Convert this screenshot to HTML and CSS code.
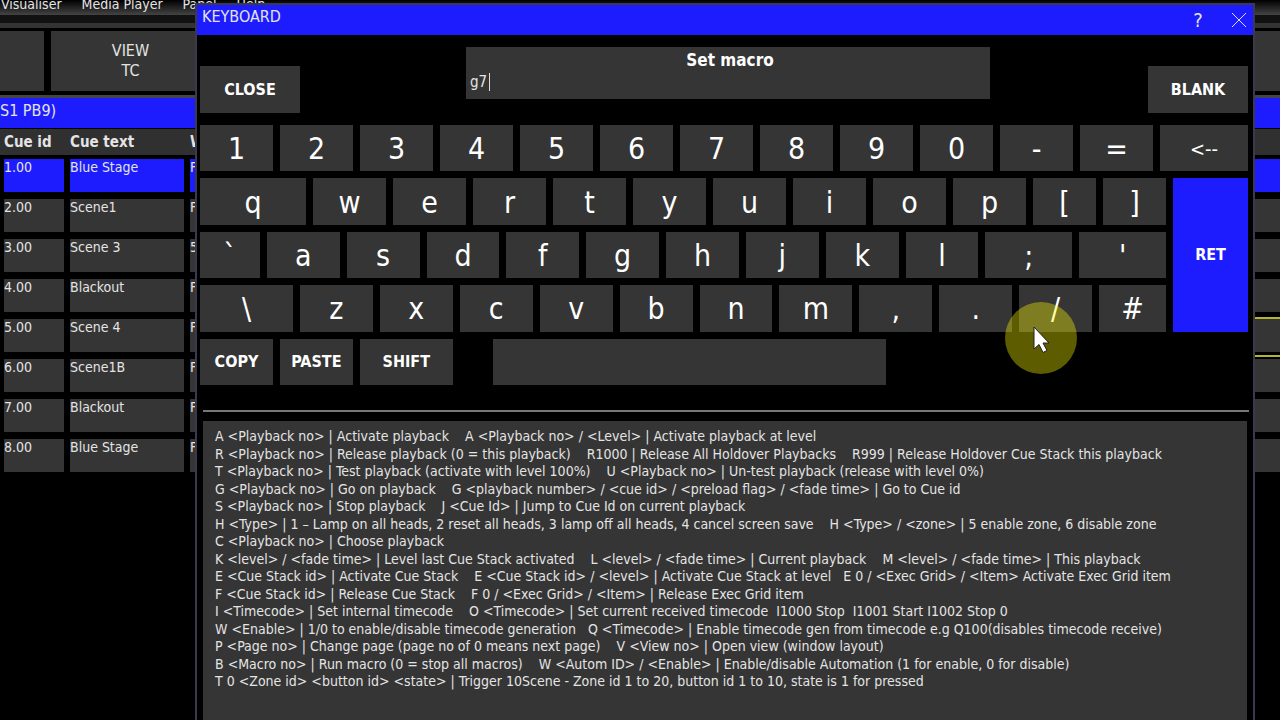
FILE: index.html
```
<!DOCTYPE html>
<html lang="en">
<head>
	<meta charset="utf-8">
	<title>Keyboard</title>
	<link rel="stylesheet" href="styles.css">
</head>
<body>
	<div class="app">
		<nav class="menu">
			<a href="#">Visualiser</a>
			<a href="#">Media Player</a>
			<a href="#">Panel</a>
			<a href="#">Help</a>
		</nav>
		<div class="toolbar"></div>
		<div class="views">
			<button class="view view-first" aria-label="View"></button>
			<button class="view">VIEW<br>TC</button>
			<button class="view view-rest" aria-label="View"></button>
		</div>
		<h2 class="stack-title">S1 PB9)</h2>
		<table class="cues">
			<thead>
				<tr><th class="col-id">Cue id</th><th class="col-text">Cue text</th><th>Wait</th><th class="col-end"></th></tr>
			</thead>
			<tbody>
				<tr class="current"><td><div>1.00</div></td><td><div>Blue Stage</div></td><td><div>F</div></td><td><div></div></td></tr>
				<tr><td><div>2.00</div></td><td><div>Scene1</div></td><td><div>F</div></td><td><div></div></td></tr>
				<tr><td><div>3.00</div></td><td><div>Scene 3</div></td><td><div>5</div></td><td><div></div></td></tr>
				<tr><td><div>4.00</div></td><td><div>Blackout</div></td><td><div>F</div></td><td><div></div></td></tr>
				<tr><td><div>5.00</div></td><td><div>Scene 4</div></td><td><div>F</div></td><td><div class="marked"></div></td></tr>
				<tr><td><div>6.00</div></td><td><div>Scene1B</div></td><td><div>F</div></td><td><div></div></td></tr>
				<tr><td><div>7.00</div></td><td><div>Blackout</div></td><td><div>F</div></td><td><div></div></td></tr>
				<tr><td><div>8.00</div></td><td><div>Blue Stage</div></td><td><div>F</div></td><td><div></div></td></tr>
			</tbody>
		</table>
	</div>

	<div class="dialog" role="dialog" aria-labelledby="dialogTitle">
		<div class="titlebar">
			<h1 id="dialogTitle">KEYBOARD</h1>
			<button class="tool" aria-label="Help">?</button>
			<button class="tool" aria-label="Close window">
				<svg width="16" height="16" viewBox="0 0 16 16"><path d="M1 1L15 15M15 1L1 15" stroke="#ddddff" stroke-width="1" fill="none"/></svg>
			</button>
		</div>
		<div class="top">
			<button class="key action">CLOSE</button>
			<div class="entry">
				<label for="macro">Set macro</label>
				<input type="text" id="macro" value="g7">
			</div>
			<button class="key action">BLANK</button>
		</div>
		<div class="keys">
			<div class="row">
				<button class="key">1</button><button class="key">2</button><button class="key">3</button><button class="key">4</button><button class="key">5</button><button class="key">6</button><button class="key">7</button><button class="key">8</button><button class="key">9</button><button class="key">0</button><button class="key">-</button><button class="key">=</button><button class="key back">&lt;--</button>
			</div>
			<div class="middle">
				<div class="letters">
					<div class="row">
						<button class="key tab">q</button><button class="key">w</button><button class="key">e</button><button class="key">r</button><button class="key">t</button><button class="key">y</button><button class="key">u</button><button class="key">i</button><button class="key">o</button><button class="key">p</button><button class="key narrow">[</button><button class="key narrow">]</button>
					</div>
					<div class="row">
						<button class="key tick">`</button><button class="key">a</button><button class="key">s</button><button class="key">d</button><button class="key">f</button><button class="key">g</button><button class="key">h</button><button class="key">j</button><button class="key">k</button><button class="key">l</button><button class="key wide">;</button><button class="key wide">'</button>
					</div>
					<div class="row">
						<button class="key long">\</button><button class="key">z</button><button class="key">x</button><button class="key">c</button><button class="key">v</button><button class="key">b</button><button class="key">n</button><button class="key">m</button><button class="key">,</button><button class="key">.</button><button class="key">/</button><button class="key hash">#</button>
					</div>
				</div>
				<button class="key ret">RET</button>
			</div>
			<div class="row">
				<button class="key word">COPY</button><button class="key word">PASTE</button><button class="key word long">SHIFT</button><span class="gap"></span><button class="key space" aria-label="Space"></button><span class="rest"></span>
			</div>
		</div>
		<div class="help">
			<ul>
				<li>A &lt;Playback no&gt; | Activate playback    A &lt;Playback no&gt; / &lt;Level&gt; | Activate playback at level</li>
				<li>R &lt;Playback no&gt; | Release playback (0 = this playback)    R1000 | Release All Holdover Playbacks    R999 | Release Holdover Cue Stack this playback</li>
				<li>T &lt;Playback no&gt; | Test playback (activate with level 100%)    U &lt;Playback no&gt; | Un-test playback (release with level 0%)</li>
				<li>G &lt;Playback no&gt; | Go on playback    G &lt;playback number&gt; / &lt;cue id&gt; / &lt;preload flag&gt; / &lt;fade time&gt; | Go to Cue id</li>
				<li>S &lt;Playback no&gt; | Stop playback    J &lt;Cue Id&gt; | Jump to Cue Id on current playback</li>
				<li>H &lt;Type&gt; | 1 – Lamp on all heads, 2 reset all heads, 3 lamp off all heads, 4 cancel screen save    H &lt;Type&gt; / &lt;zone&gt; | 5 enable zone, 6 disable zone</li>
				<li>C &lt;Playback no&gt; | Choose playback</li>
				<li>K &lt;level&gt; / &lt;fade time&gt; | Level last Cue Stack activated    L &lt;level&gt; / &lt;fade time&gt; | Current playback    M &lt;level&gt; / &lt;fade time&gt; | This playback</li>
				<li>E &lt;Cue Stack id&gt; | Activate Cue Stack    E &lt;Cue Stack id&gt; / &lt;level&gt; | Activate Cue Stack at level   E 0 / &lt;Exec Grid&gt; / &lt;Item&gt; Activate Exec Grid item</li>
				<li>F &lt;Cue Stack id&gt; | Release Cue Stack    F 0 / &lt;Exec Grid&gt; / &lt;Item&gt; | Release Exec Grid item</li>
				<li>I &lt;Timecode&gt; | Set internal timecode    O &lt;Timecode&gt; | Set current received timecode  I1000 Stop  I1001 Start I1002 Stop 0</li>
				<li>W &lt;Enable&gt; | 1/0 to enable/disable timecode generation   Q &lt;Timecode&gt; | Enable timecode gen from timecode e.g Q100(disables timecode receive)</li>
				<li>P &lt;Page no&gt; | Change page (page no of 0 means next page)    V &lt;View no&gt; | Open view (window layout)</li>
				<li>B &lt;Macro no&gt; | Run macro (0 = stop all macros)    W &lt;Autom ID&gt; / &lt;Enable&gt; | Enable/disable Automation (1 for enable, 0 for disable)</li>
				<li>T 0 &lt;Zone id&gt; &lt;button id&gt; &lt;state&gt; | Trigger 10Scene - Zone id 1 to 20, button id 1 to 10, state is 1 for pressed</li>
			</ul>
		</div>
	</div>

	<div class="pointer">
		<svg width="72" height="72" viewBox="0 0 72 72">
			<circle cx="36" cy="36" r="36" fill="#fffa00" fill-opacity=".37"/>
			<path d="M29 25V47L34 42.500L38 50.500L42 48.500L38 41H44Z" fill="#fff" stroke="#222" stroke-width="1"/>
		</svg>
	</div>
</body>
</html>
```
FILE: styles.css
```
* {
	box-sizing: border-box;
}
body {
	margin: 0;
	height: 100vh;
	overflow: hidden;
	position: relative;
	background-color: #000;
	color: #e4e4e4;
	font-family: "DejaVu Sans Condensed", "DejaVu Sans", sans-serif;
	font-stretch: condensed;
	font-size: 14px;
}
button {
	font: inherit;
	color: inherit;
	border: none;
	border-radius: 0;
	padding: 0;
	cursor: pointer;
}
h1, h2 {
	margin: 0;
	font-size: 16px;
	font-weight: normal;
}

/* main window */
.menu {
	display: flex;
	gap: 20px;
	height: 15px;
	padding-left: 1px;
	line-height: 9px;
	background: linear-gradient(#000, #444);
}
.menu a {
	color: #e4e4e4;
	text-decoration: none;
}
.toolbar {
	height: 16px;
	background-color: #111;
	border-bottom: 3px solid #000;
	box-shadow: inset 0 -5px #333;
}
.views {
	display: flex;
	gap: 7px;
	height: 60px;
}
.view {
	width: 159px;
	background-color: #353535;
	font-size: 16px;
	line-height: 20px;
}
.view-first {
	width: 44px;
}
.view-rest {
	flex: 1;
}
.stack-title {
	margin-top: 4px;
	height: 33px;
	border-top: 3px solid #444;
	background-color: #1c1cff;
	line-height: 26px;
}
.cues {
	width: 100%;
	margin-top: 1px;
	border-collapse: collapse;
	table-layout: fixed;
}
.cues th {
	height: 26px;
	padding: 0 0 0 4px;
	background-color: #2f302f;
	font-size: 15px;
	line-height: 18px;
	text-align: left;
}
.col-id {
	width: 66px;
}
.col-text {
	width: 120px;
}
.col-end {
	width: 30px;
}
.cues td {
	padding: 4px 2px 3px 4px;
}
.cues td:nth-child(3) {
	padding-right: 0;
}
.cues td:nth-child(4) {
	padding-left: 0;
	padding-right: 0;
}
.cues td div {
	height: 33px;
	line-height: 16px;
	background-color: #353535;
}
.cues .current div {
	background-color: #1c1cff;
}
.cues td .marked {
	box-shadow: 0 -2px #b5b535, 0 3px #000, 0 5px #b5b535;
}

/* keyboard window */
.dialog {
	position: absolute;
	top: 3px;
	left: 195px;
	right: 25px;
	bottom: -10px;
	display: flex;
	flex-direction: column;
	background-color: #000;
	border: 2px solid #3a3a4c;
}
.titlebar {
	display: flex;
	align-items: center;
	height: 30px;
	padding-left: 5px;
	background-color: #1c1cff;
}
.titlebar h1 {
	flex: 1;
	line-height: 24px;
	align-self: flex-start;
}
.tool {
	width: 42px;
	height: 28px;
	background: none;
	font-family: "DejaVu Sans", sans-serif;
	font-size: 20px;
}
.tool svg {
	display: block;
	margin: 0 auto;
}
.tool:last-child {
	width: 28px;
	margin-left: 6px;
}
.top {
	display: flex;
	justify-content: space-between;
	align-items: flex-end;
	padding: 12px 5px 12px 3px;
}
.key {
	flex: 73 1 0;
	min-width: 0;
	background-color: #353535;
	color: #fff;
	font-size: 30px;
	line-height: 40px;
	padding-top: 2px;
}
.top .action {
	flex: 0 0 100px;
	height: 47px;
}
.action, .word, .ret {
	padding-top: 0;
	font-size: 16px;
	font-weight: bold;
}
.entry {
	display: flex;
	flex-direction: column;
	align-items: flex-start;
	align-self: flex-start;
	width: 50%;
	height: 52px;
	margin-left: 8px;
	margin-bottom: 14px;
	padding-left: 4px;
	background-color: #353535;
}
.entry label {
	align-self: center;
	color: #fff;
	font-size: 17px;
	font-weight: bold;
	line-height: 26px;
}
.entry input {
	width: 20px;
	height: 18px;
	padding: 0;
	border: none;
	border-right: 1px solid #ddd;
	outline: none;
	background: none;
	color: inherit;
	font: inherit;
	font-size: 15px;
}
.keys {
	display: flex;
	flex-direction: column;
	gap: 7px;
	height: 260px;
	padding: 0 5px 0 3px;
}
.row {
	display: flex;
	flex: 1 1 0;
	gap: 7px;
	min-height: 0;
}
.middle {
	display: flex;
	flex: 3 1 14px;
	gap: 7px;
	min-height: 0;
}
.letters {
	display: flex;
	flex-direction: column;
	flex: 967 1 0;
	gap: 7px;
}
.back {
	flex-grow: 88;
	font-size: 20px;
}
.tab {
	flex-grow: 106;
}
.narrow {
	flex-grow: 63;
}
.tick {
	flex-grow: 60;
}
.wide {
	flex-grow: 87;
}
.long {
	flex-grow: 93;
}
.hash {
	flex-grow: 67;
}
.ret {
	flex-grow: 75;
	background-color: #1c1cff;
}
.gap {
	flex: 26 1 0;
}
.space {
	flex-grow: 394;
}
.rest {
	flex: 355 1 0;
}
.help {
	flex: 1;
	margin: 25px 4px 0 6px;
	padding-top: 9px;
	border-top: 2px solid #777;
}
.help ul {
	display: flex;
	flex-direction: column;
	justify-content: space-between;
	height: 100%;
	margin: 0 2px 0 0;
	padding: 7px 0 38px 12px;
	background-color: #353535;
	list-style: none;
}
.help li {
	line-height: 17px;
	white-space: pre;
}

/* highlighted mouse pointer */
.pointer {
	position: absolute;
	left: 1005px;
	top: 302px;
	pointer-events: none;
}
.pointer svg {
	display: block;
}
```
